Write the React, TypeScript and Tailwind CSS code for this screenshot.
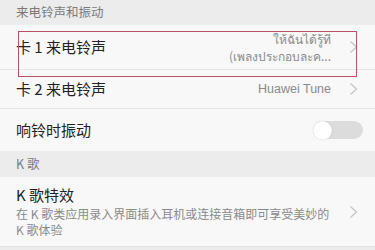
import React from "react";

const FONT = { fontFamily: '"Noto Sans CJK SC", "Noto Sans", "Liberation Sans", sans-serif' };

function Chevron() {
  return (
    <svg width="9" height="14" viewBox="0 0 9 14" className="shrink-0">
      <path d="M1.5 1.5 L7.5 7 L1.5 12.5" fill="none" stroke="#c4c4c4" strokeWidth="1.2" />
    </svg>
  );
}

function SectionHeader({ label, h }: { label: string; h: string }) {
  return (
    <div className={`${h} flex items-center bg-[#ececec] px-4 text-[12.5px] text-[#7a7a7a]`}>{label}</div>
  );
}

export default function App() {
  return (
    <div className="w-[375px] h-[250px] overflow-hidden bg-[#ececec]" style={FONT}>
      <SectionHeader label="来电铃声和振动" h="h-[25px]" />

      <div className="relative">
        <div className="h-[45px] flex items-center bg-[#f8f8f8] border-b border-[#e4e4e4] pl-4 pr-[17px]">
          <span className="flex-1 text-[15px] text-[#222]">卡 1 来电铃声</span>
          <div className="flex flex-col items-end mr-[18px] text-[12px] leading-[17px] text-[#8a8a8a]">
            <span>ให้ฉันได้รู้ที</span>
            <span>(เพลงประกอบละค...</span>
          </div>
          <Chevron />
        </div>
        <div className="absolute left-[18px] right-[18px] top-[6px] h-[46px] border border-[#b8506a]" />
      </div>

      <div className="h-[39px] flex items-center bg-[#f8f8f8] border-b border-[#e4e4e4] pl-4 pr-[17px]">
        <span className="flex-1 text-[15px] text-[#222]">卡 2 来电铃声</span>
        <span className="mr-[18px] text-[12.5px] text-[#8a8a8a]" style={{ fontFamily: '"Liberation Sans", sans-serif' }}>
          Huawei Tune
        </span>
        <Chevron />
      </div>

      <div className="h-[42px] flex items-center bg-[#f8f8f8] pl-4 pr-[12px]">
        <span className="flex-1 text-[15px] text-[#222]">响铃时振动</span>
        <div className="w-[50px] h-[18px] rounded-full bg-[#dcdcdc] flex items-center">
          <div className="w-[19px] h-[19px] rounded-full bg-white shadow-[0_0_1px_rgba(0,0,0,0.25)]" />
        </div>
      </div>

      <SectionHeader label="K 歌" h="h-[26px]" />

      <div className="h-[70px] flex items-center bg-[#f8f8f8] border-b border-[#e4e4e4] pl-4 pr-[17px]">
        <div className="flex-1 flex flex-col">
          <span className="text-[15px] leading-[20px] text-[#222]">K 歌特效</span>
          <span className="mt-[1px] w-[322px] text-[12px] leading-[16px] text-[#8a8a8a]">
            在 K 歌类应用录入界面插入耳机或连接音箱即可享受美妙的 K 歌体验
          </span>
        </div>
        <Chevron />
      </div>
    </div>
  );
}
